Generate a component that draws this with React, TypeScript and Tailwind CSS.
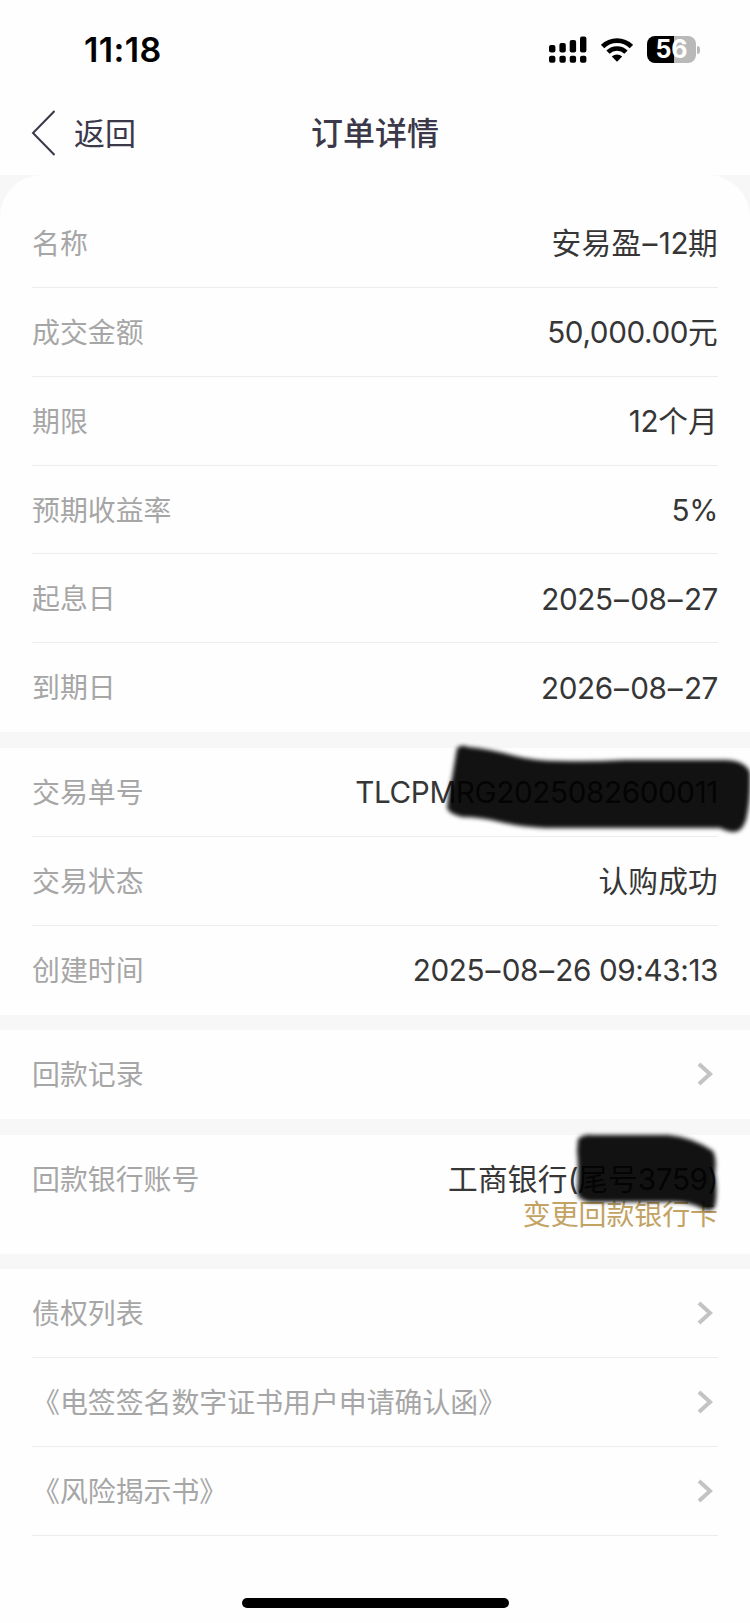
import React from 'react';

interface Item {
  label: string;
  value?: string;
  link?: boolean;
}

const summary: Item[] = [
  { label: '名称', value: '安易盈–12期' },
  { label: '成交金额', value: '50,000.00元' },
  { label: '期限', value: '12个月' },
  { label: '预期收益率', value: '5%' },
  { label: '起息日', value: '2025–08–27' },
  { label: '到期日', value: '2026–08–27' },
];

const documents: Item[] = [
  { label: '债权列表', link: true },
  { label: '《电签签名数字证书用户申请确认函》', link: true },
  { label: '《风险揭示书》', link: true },
];

const Chevron: React.FC = () => (
  <svg className="mr-[5px] h-6 w-4" viewBox="0 0 16 24" fill="none">
    <path d="M2 2 L13 12 L2 22" stroke="#c3c3c3" strokeWidth="4" />
  </svg>
);

const Label: React.FC<{ text: string }> = ({ text }) => (
  <span className="pt-[4px] text-[27.9px] text-[#a6a6a6]">{text}</span>
);

/** Value text; dashes, Chinese runs and Latin runs are spaced separately. */
const Value: React.FC<{ text: string }> = ({ text }) => (
  <span className="pt-px text-[29.7px] whitespace-pre text-[#363636]">
    {text.split(/(–|[\u4e00-\u9fff]+)/).filter(Boolean).map((part, i) => {
      if (part === '–') return <span key={i} className="px-[1.3px]">{part}</span>;
      if (/[\u4e00-\u9fff]/.test(part)) return <span key={i} className="tracking-[0.2px]">{part}</span>;
      return <span key={i} className="tracking-[-0.4px]">{part}</span>;
    })}
  </span>
);

/** A label / value line with a hairline divider under it. */
const Row: React.FC<Item & { last?: boolean; children?: React.ReactNode }> = ({ label, value, link, last, children }) => (
  <div className={`relative mx-8 flex h-[88.9px] items-center justify-between border-b ${last ? 'border-transparent' : 'border-[#ededed]'}`}>
    <Label text={label} />
    {value && <Value text={value} />}
    {link && <Chevron />}
    {children}
  </div>
);

const Gap: React.FC = () => <div className="h-[15.5px] shrink-0 bg-[#f7f7f7]" />;

const StatusBar: React.FC = () => (
  <div className="flex h-[98px] items-center justify-between pr-[50px] pl-[84px] text-black">
    <span className="pt-[2px] text-[34px] leading-none font-semibold tracking-[0.4px]">11:18</span>
    <div className="flex items-center pt-px">
      <svg className="h-[27px] w-[38px]" viewBox="0 0 38 27">
        <rect x="0" y="9" width="6.4" height="7.5" rx="2" />
        <rect x="10.4" y="7" width="6.4" height="9.5" rx="2" />
        <rect x="20.7" y="4" width="6.4" height="12.5" rx="2" />
        <rect x="31" y="0.5" width="6.4" height="16" rx="2" />
        <rect x="0" y="19.8" width="6.4" height="7" rx="2" />
        <rect x="10.4" y="19.8" width="6.4" height="7" rx="2" />
        <rect x="20.7" y="19.8" width="6.4" height="7" rx="2" />
        <rect x="31" y="19.8" width="6.4" height="7" rx="2" />
      </svg>
      <svg className="ml-[14px] h-6 w-8" viewBox="0 0 32 24" fill="none" stroke="#000">
        <path d="M1.6 8.6 A20.4 20.4 0 0 1 30.4 8.6" strokeWidth="4.8" />
        <path d="M7 14.2 A12.7 12.7 0 0 1 25 14.2" strokeWidth="4.6" />
        <path d="M16 23.8 L10.8 18.6 A7.4 7.4 0 0 1 21.2 18.6 Z" fill="#000" stroke="none" />
      </svg>
      <div className="ml-[14px] flex h-[27px] w-[49px] items-center justify-center rounded-[8px] bg-linear-to-r from-black from-56% to-[#b9b9b9] to-56% text-[25px] leading-none font-bold text-white">
        56
      </div>
      <div className="ml-[1px] h-[8px] w-[3px] rounded-r-full bg-[#b9b9b9]" />
    </div>
  </div>
);

const App: React.FC = () => (
  <div className="flex h-[1623px] w-[750px] flex-col overflow-hidden bg-[#fefefe] font-['Inter','Noto_Sans_CJK_SC',sans-serif]">
    <StatusBar />

    <header className="relative flex h-[77px] items-center justify-center pb-[5px] text-[#3b3849]">
      <button className="absolute top-0 left-[31px] flex h-[70px] items-center">
        <svg className="h-[46px] w-6" viewBox="0 0 24 46" fill="none">
          <path d="M23.5 1 L2 23 L23.5 45" stroke="#3b3849" strokeWidth="2" />
        </svg>
        <span className="ml-[19px] pt-[2px] text-[31px]">返回</span>
      </button>
      <h1 className="text-[32px] font-medium">订单详情</h1>
    </header>

    <div className="bg-[#f7f7f7]">
      <section className="rounded-t-[42px] bg-[#fefefe] pt-[23.9px]">
        {summary.map((item, i) => (
          <Row key={item.label} {...item} last={i === summary.length - 1} />
        ))}
      </section>
    </div>

    <Gap />
    <section className="pt-[0.3px]">
      <Row label="交易单号" value="TLCPMRG2025082600011">
        {/* marker stroke over the order number */}
        <svg className="absolute -right-8 -top-2 h-[104px] w-[320px]" viewBox="430 740 320 104">
          <path
            className="blur-[2px]"
            d="M457 748 Q462 744 468 747 Q490 749 515 756 Q535 761 560 761 Q590 762 625 760 H725 Q744 760 750 772 Q751 800 746 820 Q742 832 734 832 Q728 832 720 828 H545 Q522 827 500 822 Q480 817 462 817 Q449 814 447 808 Q449 790 452 778 Z"
            fill="#000"
            fillOpacity="0.93"
          />
        </svg>
      </Row>
      <Row label="交易状态" value="认购成功" />
      <Row label="创建时间" value="2025–08–26 09:43:13" last />
    </section>

    <Gap />
    <section>
      <Row label="回款记录" link last />
    </section>

    <Gap />
    <section className="relative mx-8 h-[119px]">
      <div className="flex h-[89px] items-center justify-between">
        <Label text="回款银行账号" />
        <Value text="工商银行(尾号3759)" />
      </div>
      <button className="absolute top-[60px] right-0 text-[27.9px] leading-[40px] text-[#c2a364]">变更回款银行卡</button>
      {/* marker stroke over the card number */}
      <svg className="absolute -right-8 -top-2 h-[94px] w-[190px]" viewBox="560 1126 190 94">
        <path
          className="blur-[2px]"
          d="M578 1138 Q584 1133 592 1134 H668 Q692 1136 713 1150 Q717 1158 715 1172 Q718 1190 715 1206 Q711 1211 703 1208 Q690 1201 674 1201 H590 Q579 1200 577 1192 Q579 1165 577 1150 Z"
          fill="#000"
          fillOpacity="0.93"
        />
      </svg>
    </section>

    <Gap />
    <section>
      {documents.map((item) => (
        <Row key={item.label} {...item} />
      ))}
    </section>

    <div className="mx-auto mt-auto mb-[15px] h-[10px] w-[267px] rounded-full bg-black" />
  </div>
);

export default App;
